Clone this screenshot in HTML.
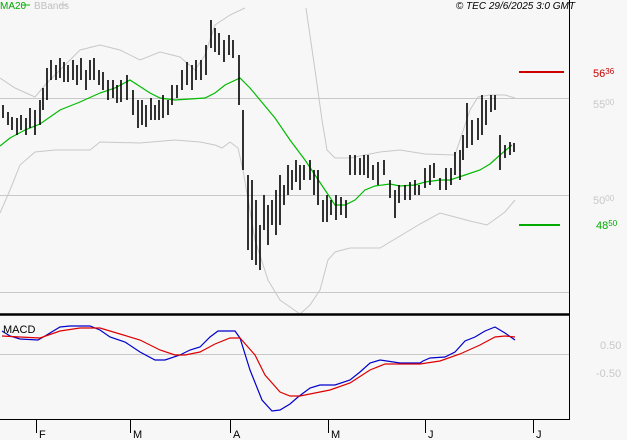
<!DOCTYPE html><html><head><style>
body{margin:0;background:#f7f7f7;}
svg{display:block;font-family:"Liberation Sans",sans-serif;}
</style></head><body>
<svg width="627" height="440" viewBox="0 0 627 440" xmlns="http://www.w3.org/2000/svg">
<rect width="627" height="440" fill="#f7f7f7"/>
<g stroke="#c8c8c8" stroke-width="1" fill="none">
<path d="M0 98.5H569M0 195.5H569M0 292.5H569M0 354.5H569"/>
<path d="M0 78L15 88L35 97L45 85L60 70L80 50L100 45L120 50L140 60L160 52L180 57L195 70L205 55L215 25L230 15L245 8"/>
<path d="M0 213L10 190L20 165L35 152L55 150L90 150L100 142L140 143L175 140L200 142L215 145L222 148L230 142L238 148L243 170L255 240L268 280L280 300L300 314L310 305L320 290L328 260L335 252L350 248L380 248L420 224L440 213L470 221L487 225L505 212L515 200"/>
<path d="M306 8L315 70L322 120L327 150L335 158L350 158L380 152L400 150L425 154L455 155L460 140L470 110L478 97L490 95L505 95L515 98"/>
</g>
<path d="M0 146L10 138L25 130L40 124L60 110L80 102L100 93L115 88L130 80L150 93L160 98L175 100L205 98L215 93L225 85L240 78L250 88L260 100L275 118L290 140L305 160L315 175L325 190L335 205L345 205L355 200L365 190L375 186L390 184L400 186L415 185L425 182L440 180L450 180L465 175L480 170L490 164L500 155L512 145" fill="none" stroke="#00bb00" stroke-width="1.2"/>
<g stroke="#000" stroke-width="1.6">
<path d="M3 105V118M8 112V125M12 117V130M17 118V135M21 115V130M26 118V135M30 108V128M35 110V135M40 100V125M43 88V110M47 68V100M51 60V80M56 65V80M60 58V78M64 62V82M68 65V82M73 60V80M77 65V85M81 58V80M86 70V90M90 60V80M94 58V80M99 70V85M103 72V90M108 80V100M113 80V98M117 85V103M121 80V102M127 75V100M133 90V115M138 100V128M142 100V125M146 105V127M151 98V120M155 105V120M159 100V120M163 95V118M168 100V115M172 85V105M177 85V98M182 70V90M187 62V85M192 65V90M196 60V80M201 60V80M206 45V75M211 20V48M215 28V52M219 33V55M224 40V62M229 35V55M233 40V58M239 55V105M243 110V170M248 175V250M252 180V260M256 200V265M260 225V270M264 195V230M268 205V245M272 200V225M276 190V235M280 175V225M284 185V205M288 165V195M292 170V190M296 160V182M300 165V190M304 165V180M310 160V180M314 170V195M318 170V205M323 200V222M327 195V222M331 200V215M336 195V220M341 197V215M346 200V218M350 155V175M355 155V175M360 158V175M364 155V175M368 155V178M373 165V180M378 162V185M384 160V175M390 180V198M395 190V218M399 185V203M405 185V200M410 182V200M415 180V195M419 185V195M425 168V188M430 165V185M434 163V178M440 178V190M446 168V190M451 168V185M455 152V175M460 150V180M463 135V160M467 103V148M472 120V145M478 118V140M482 95V135M486 100V125M491 95V112M495 95V110M500 135V170M505 145V158M510 142V155M514 143V152"/>
</g>
<path d="M0 314.5H569" stroke="#000" stroke-width="2.5"/>
<path d="M569.5 0V419.5H0" stroke="#000" stroke-width="1" fill="none"/>
<path d="M36.5 419V433M130.5 419V433M230.5 419V433M328.5 419V433M425.5 419V433M533.5 419V433" stroke="#000"/>
<g font-size="11" fill="#000"><text x="39" y="438">F</text><text x="133" y="438">M</text><text x="233" y="438">A</text><text x="331" y="438">M</text><text x="428" y="438">J</text><text x="536" y="438">J</text></g>
<polyline fill="none" stroke="#0000cc" stroke-width="1.2" points="2,331 10,336 20,339 38,340 45,336 60,327 70,326 90,326 100,330 110,337 125,342 140,352 155,360 165,360 180,355 190,350 200,347 210,337 218,331 235,331 240,338 250,370 262,400 272,411 280,410 290,404 298,397 310,388 320,385 335,385 350,380 360,372 370,363 380,360 400,363 420,363 423,361 430,358 445,357 455,352 465,341 475,337 485,331 495,327 505,333 515,340"/>
<polyline fill="none" stroke="#dd0000" stroke-width="1.2" points="2,336 20,337 40,338 60,331 80,328 100,328 120,334 140,340 160,350 175,355 185,355 200,352 215,344 230,338 240,338 255,355 265,375 280,392 290,396 300,396 330,390 350,383 370,370 385,364 400,364 420,364 440,361 460,354 480,345 495,337 505,336 515,337"/>
<text x="3" y="333" font-size="11" fill="#000">MACD</text>
<text x="0" y="9" font-size="10" fill="#00aa00">MA20</text><path d="M22 5H30" stroke="#00bb00"/>
<text x="34" y="9" font-size="10" fill="#c0c0c0">BBands</text><path d="M60 5H67" stroke="#c8c8c8"/>
<text x="575" y="9" font-size="10" font-style="italic" fill="#000" text-anchor="end">© TEC 29/6/2025 3:0 GMT</text>
<path d="M519 72H564" stroke="#cc0000" stroke-width="2"/>
<path d="M519 225H560" stroke="#00aa00" stroke-width="2"/>
<g font-size="11"><text x="593" y="77" fill="#cc0000">56<tspan font-size="8" dy="-3">36</tspan></text>
<text x="593" y="108" fill="#c8c8c8">55<tspan font-size="8" dy="-3">00</tspan></text>
<text x="593" y="204" fill="#c8c8c8">50<tspan font-size="8" dy="-3">00</tspan></text>
<text x="596" y="229" fill="#00aa00">48<tspan font-size="8" dy="-3">50</tspan></text>
<text x="600" y="349" fill="#c8c8c8">0.50</text>
<text x="596" y="377" fill="#c8c8c8">-0.50</text></g>
</svg></body></html>
